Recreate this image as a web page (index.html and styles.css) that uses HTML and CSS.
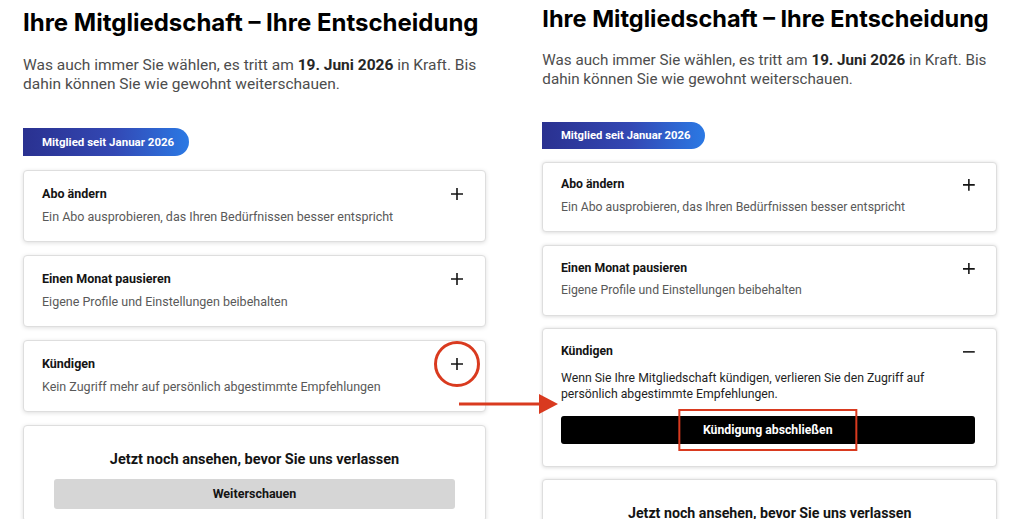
FILE: index.html
```html
<!DOCTYPE html>
<html lang="de">
<head>
<meta charset="utf-8">
<title>Ihre Mitgliedschaft – Ihre Entscheidung</title>
<link rel="stylesheet" href="styles.css">
</head>
<body>
<div class="page">
  <section class="panel panel-before">
    <h1 class="title">Ihre Mitgliedschaft – Ihre Entscheidung</h1>
    <p class="lead">Was auch immer Sie wählen, es tritt am <strong>19. Juni 2026</strong> in Kraft. Bis dahin können Sie wie gewohnt weiterschauen.</p>
    <div class="badge">Mitglied seit Januar 2026</div>
    <div class="cards">
      <div class="card">
        <div class="card-head">
          <span class="card-title">Abo ändern</span>
          <span class="toggle"><svg viewBox="0 0 12 12" width="12" height="12"><path d="M6 0v12M0 6h12"/></svg></span>
        </div>
        <p class="card-sub">Ein Abo ausprobieren, das Ihren Bedürfnissen besser entspricht</p>
      </div>
      <div class="card">
        <div class="card-head">
          <span class="card-title">Einen Monat pausieren</span>
          <span class="toggle"><svg viewBox="0 0 12 12" width="12" height="12"><path d="M6 0v12M0 6h12"/></svg></span>
        </div>
        <p class="card-sub">Eigene Profile und Einstellungen beibehalten</p>
      </div>
      <div class="card">
        <div class="card-head">
          <span class="card-title">Kündigen</span>
          <span class="toggle"><svg viewBox="0 0 12 12" width="12" height="12"><path d="M6 0v12M0 6h12"/></svg><span class="ring"></span></span>
        </div>
        <p class="card-sub">Kein Zugriff mehr auf persönlich abgestimmte Empfehlungen</p>
      </div>
      <div class="card card-watch">
        <p class="watch-title">Jetzt noch ansehen, bevor Sie uns verlassen</p>
        <div class="btn btn-grey">Weiterschauen</div>
      </div>
    </div>
  </section>

  <section class="panel panel-after">
    <h1 class="title">Ihre Mitgliedschaft – Ihre Entscheidung</h1>
    <p class="lead">Was auch immer Sie wählen, es tritt am <strong>19. Juni 2026</strong> in Kraft. Bis dahin können Sie wie gewohnt weiterschauen.</p>
    <div class="badge">Mitglied seit Januar 2026</div>
    <div class="cards">
      <div class="card">
        <div class="card-head">
          <span class="card-title">Abo ändern</span>
          <span class="toggle"><svg viewBox="0 0 12 12" width="12" height="12"><path d="M6 0v12M0 6h12"/></svg></span>
        </div>
        <p class="card-sub">Ein Abo ausprobieren, das Ihren Bedürfnissen besser entspricht</p>
      </div>
      <div class="card">
        <div class="card-head">
          <span class="card-title">Einen Monat pausieren</span>
          <span class="toggle"><svg viewBox="0 0 12 12" width="12" height="12"><path d="M6 0v12M0 6h12"/></svg></span>
        </div>
        <p class="card-sub">Eigene Profile und Einstellungen beibehalten</p>
      </div>
      <div class="card card-open">
        <div class="card-head">
          <span class="card-title">Kündigen</span>
          <span class="toggle"><svg viewBox="0 0 12 12" width="12" height="12"><path d="M0 6h12"/></svg></span>
        </div>
        <p class="card-body">Wenn Sie Ihre Mitgliedschaft kündigen, verlieren Sie den Zugriff auf persönlich abgestimmte Empfehlungen.</p>
        <div class="btn btn-black">Kündigung abschließen<span class="frame"></span></div>
      </div>
      <div class="card card-watch">
        <p class="watch-title">Jetzt noch ansehen, bevor Sie uns verlassen</p>
        <div class="btn btn-grey">Weiterschauen</div>
      </div>
    </div>
  </section>

  <svg class="arrow" viewBox="0 0 100 22" width="100" height="22">
    <path class="arrow-line" d="M0 11H82"/>
    <path class="arrow-head" d="M80 1L99 11L80 21Z"/>
  </svg>
</div>
</body>
</html>
```

FILE: styles.css
```css
* {
  box-sizing: border-box;
  margin: 0;
  padding: 0;
}

html,
body {
  background: #ffffff;
}

body {
  width: 1024px;
  height: 519px;
  overflow: hidden;
  font-family: Roboto, "Liberation Sans", sans-serif;
  color: #141414;
}

.page {
  position: relative;
  display: flex;
  align-items: flex-start;
  height: 519px;
}

.panel {
  flex: none;
}

.panel-before {
  width: 510px;
  padding: 8px 0 0 23px;
}

.panel-before > * {
  width: 463px;
}

.panel-after {
  zoom: 0.98;
  padding: 4px 0 0 33px;
}

.panel-after > * {
  width: 464px;
}

/* heading + intro */
.title {
  font-family: Inter, Roboto, sans-serif;
  font-size: 24px;
  line-height: 30px;
  font-weight: 700;
  letter-spacing: 0;
  color: #000;
  white-space: nowrap;
}

.lead {
  margin-top: 18px;
  font-size: 15.5px;
  line-height: 19px;
  color: #4d4d4d;
}

.lead strong {
  color: #262626;
  font-weight: 700;
}

/* member badge */
.badge {
  width: 166px !important;
  height: 28px;
  margin-top: 34px;
  padding-left: 19px;
  border-radius: 0 14px 14px 0;
  background: linear-gradient(90deg, #2a3190 0%, #3348b4 55%, #2b79e4 100%);
  color: #fff;
  font-size: 11.5px;
  font-weight: 700;
  line-height: 28px;
  white-space: nowrap;
}

/* option cards */
.cards {
  display: flex;
  flex-direction: column;
  gap: 13px;
  margin-top: 14px;
}

.panel-after .cards {
  margin-top: 13px;
}

.card {
  background: #fff;
  border: 1px solid #dedede;
  border-radius: 4px;
  box-shadow: 0 1px 4px rgba(0, 0, 0, 0.13);
  padding: 15px 22px 16px 18px;
}

.card-head {
  display: flex;
  align-items: center;
  justify-content: space-between;
}

.card-title {
  font-size: 12.5px;
  line-height: 16px;
  font-weight: 700;
}

.toggle {
  position: relative;
  display: flex;
  width: 12px;
  height: 12px;
}

.toggle svg {
  fill: none;
  stroke: #141414;
  stroke-width: 1.6;
}

.card-sub {
  margin-top: 7px;
  font-size: 12.5px;
  line-height: 16px;
  color: #595959;
}

.card-open {
  padding-top: 15px;
  padding-bottom: 22px;
}

.card-body {
  margin-top: 12px;
  font-size: 12.5px;
  line-height: 16px;
  color: #1f1f1f;
}

.card-watch {
  padding: 25px 30px 12px;
}

.watch-title {
  font-size: 14.5px;
  line-height: 18px;
  font-weight: 700;
  text-align: center;
}

.btn {
  position: relative;
  margin-top: 13px;
  height: 30px;
  border-radius: 3px;
  font-size: 12.5px;
  font-weight: 700;
  line-height: 30px;
  text-align: center;
}

.btn-grey {
  margin-top: 10px;
  background: #d6d6d6;
  color: #141414;
}

.btn-black {
  height: 29px;
  line-height: 29px;
  background: #000;
  color: #fff;
}

/* red callouts drawn over the screens */
.ring {
  position: absolute;
  left: 50%;
  top: 50%;
  width: 46px;
  height: 46px;
  transform: translate(-50%, -50%);
  border: 3px solid #d93a1f;
  border-radius: 50%;
}

.frame {
  position: absolute;
  left: 50%;
  top: -7px;
  width: 183px;
  height: 43px;
  transform: translateX(-50%);
  border: 3px solid #d93a1f;
}

.arrow {
  position: absolute;
  left: 459px;
  top: 393px;
}

.arrow-line {
  stroke: #d93a1f;
  stroke-width: 3;
  fill: none;
}

.arrow-head {
  fill: #d93a1f;
}
```
